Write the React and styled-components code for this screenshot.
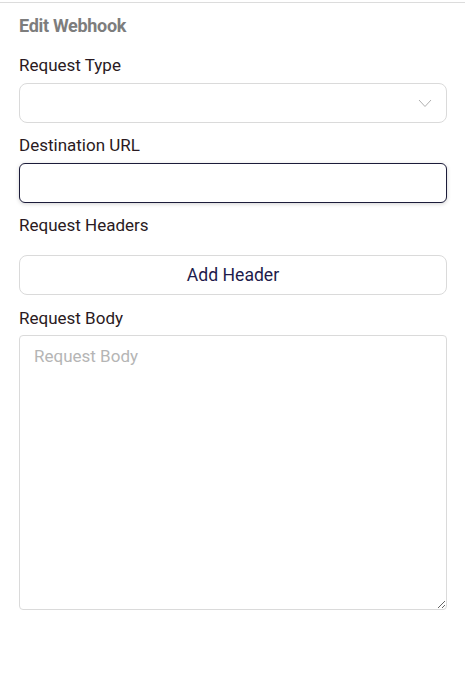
import React from "react";
import styled, { createGlobalStyle } from "styled-components";

const Global = createGlobalStyle`
  html, body { margin: 0; padding: 0; background: #fff; }
  body { font-family: Roboto, "Noto Sans", Arial, sans-serif; }
  * { box-sizing: border-box; }
`;

const Panel = styled.div`
  margin-top: 2px;
  border-top: 1px solid #dcdcdc;
  padding: 11px 18px 0 19px;
  display: flex;
  flex-direction: column;
`;

const Title = styled.h2`
  margin: 0 0 15px 0;
  font-size: 18px;
  line-height: 24px;
  font-weight: 700;
  color: #7d7d7d;
  letter-spacing: -0.3px;
`;

const Label = styled.label`
  display: block;
  font-size: 17px;
  line-height: 24px;
  color: #2a1a22;
  margin-bottom: ${(p) => p.$gap ?? 6}px;
`;

const Field = styled.div`
  margin-bottom: ${(p) => p.$gap ?? 10}px;
`;

const SelectBox = styled.div`
  position: relative;
  height: 40px;
  border: 1px solid #dadada;
  border-radius: 8px;
  background: #fff;
`;

const Chevron = styled.svg`
  position: absolute;
  right: 14px;
  top: 15px;
`;

const Input = styled.input`
  display: block;
  width: 100%;
  height: 40px;
  border: 1px solid #1c1c3a;
  border-radius: 6px;
  background: #fff;
  box-shadow: 0 1px 4px rgba(0, 0, 0, 0.18);
  outline: none;
  padding: 0 12px;
  font-family: inherit;
  font-size: 17px;
`;

const Button = styled.button`
  display: block;
  width: 100%;
  height: 40px;
  border: 1px solid #dadada;
  border-radius: 8px;
  background: #fff;
  font-family: inherit;
  font-size: 17.6px;
  color: #1e1b4b;
  cursor: pointer;
`;

const TextArea = styled.textarea`
  display: block;
  width: 100%;
  height: 275px;
  border: 1px solid #dadada;
  border-radius: 4px;
  padding: 9px 14px;
  font-family: inherit;
  font-size: 17px;
  line-height: 22px;
  color: #222;
  outline: none;
  resize: vertical;
  &::placeholder { color: #b5b5b5; }
`;

export default function App() {
  return (
    <>
      <Global />
      <Panel>
        <Title>Edit Webhook</Title>
        <Field>
          <Label>Request Type</Label>
          <SelectBox>
            <Chevron width="14" height="9" viewBox="0 0 14 9">
              <path d="M1 1 L7 7.5 L13 1" fill="none" stroke="#b0b0b0" strokeWidth="1" />
            </Chevron>
          </SelectBox>
        </Field>
        <Field>
          <Label>Destination URL</Label>
          <Input type="text" />
        </Field>
        <Field $gap={11}>
          <Label $gap={18}>Request Headers</Label>
          <Button>Add Header</Button>
        </Field>
        <Field $gap={0}>
          <Label $gap={5}>Request Body</Label>
          <TextArea placeholder="Request Body" />
        </Field>
      </Panel>
    </>
  );
}
